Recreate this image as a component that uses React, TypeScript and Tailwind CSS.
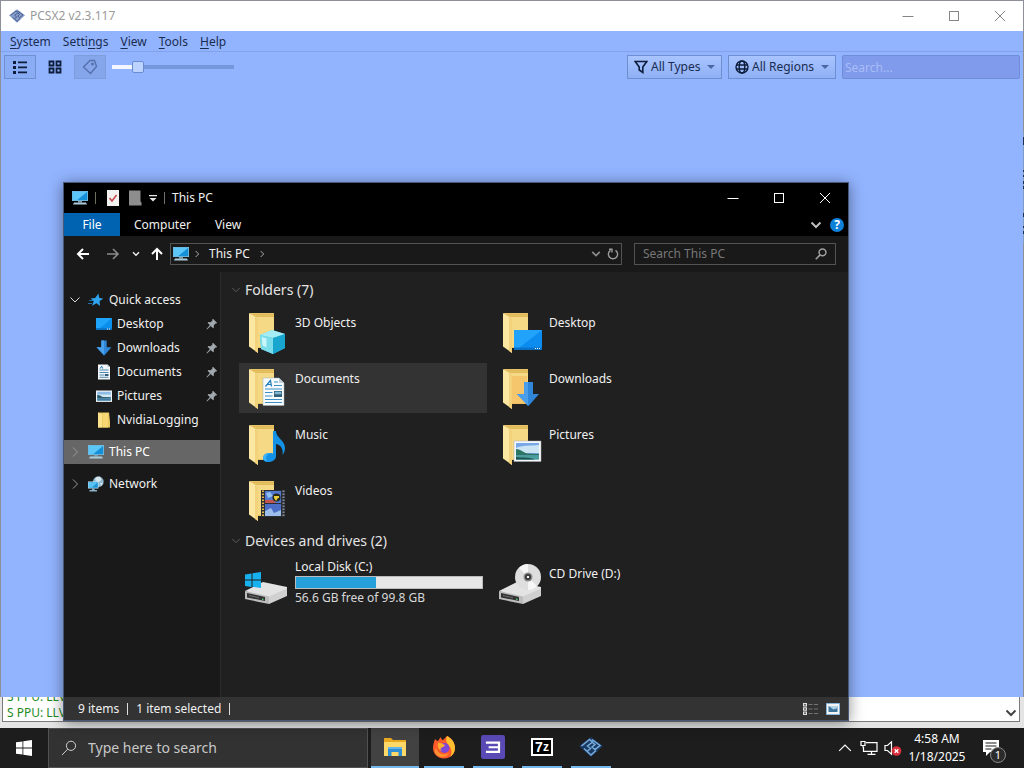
import type { ReactNode } from 'react';

type IconProps = { className?: string };

/* ---------- small glyphs ---------- */

function Chevron({ dir, className = '' }: { dir: 'down' | 'right' | 'up'; className?: string }) {
    const d = { down: 'M1.5 3.5 6 8l4.5-4.5', right: 'M4 1.5 8.5 6 4 10.5', up: 'M1 8.5 6 3.5l5 5' }[dir];
    return (
        <svg viewBox="0 0 12 12" fill="none" stroke="currentColor" className={className}>
            <path d={d} />
        </svg>
    );
}

function MinimizeIcon() {
    return (
        <svg viewBox="0 0 12 12" stroke="currentColor" className="w-3 h-3">
            <path d="M.5 6.5h11" />
        </svg>
    );
}

function MaximizeIcon() {
    return (
        <svg viewBox="0 0 12 12" fill="none" stroke="currentColor" className="w-3 h-3">
            <rect x="1.5" y="1.5" width="9" height="9" />
        </svg>
    );
}

function CloseIcon() {
    return (
        <svg viewBox="0 0 12 12" stroke="currentColor" className="w-3 h-3">
            <path d="m1 1 10 10M11 1 1 11" />
        </svg>
    );
}

function PinIcon() {
    return (
        <svg viewBox="0 0 12 12" fill="#a0a8ae" className="w-3 h-3 mr-0.5">
            <path d="M7 .8 11.2 5l-1 .6-.7-.1-1.7 1.8.1 2.1-.8.8-2.4-2.3L1 11.4l-.5-.5 3.4-3.8L1.6 4.9l.8-.8 2.2.1 1.8-1.7-.1-.9z" />
        </svg>
    );
}

function SearchIcon({ className }: IconProps) {
    return (
        <svg viewBox="0 0 16 16" fill="none" stroke="currentColor" className={className}>
            <circle cx="10" cy="5.8" r="4.6" />
            <path d="M6.7 9.2 1 15" />
        </svg>
    );
}

/* ---------- coloured icons ---------- */

function MonitorIcon({ className = 'w-4 h-4' }: IconProps) {
    return (
        <svg viewBox="0 0 16 16" className={className}>
            <path fill="#8fc4de" d="M0 1h16v10H0z" />
            <path fill="#1590d8" d="M.7 1.7h14.6v8.6H.7z" />
            <path fill="#5cc6f8" d="M.7 1.7h14.6L5 10.3H.7z" />
            <path fill="#7c98a6" d="M6 11h4v1.6H6z" />
            <path fill="#a9cbdc" d="M2 12.6h12l1 1.9H1z" />
        </svg>
    );
}

function StarIcon({ className = 'w-4 h-4' }: IconProps) {
    return (
        <svg viewBox="0 0 16 16" className={className}>
            <path fill="#2ea3ee" d="m10.5 1.600.6 4.200 4.200.9-3.700 2.400.4 4.900-3.500-2.700-4.500 2.500 1.700-4.600L2.600 6.400l4.600-.3z" />
            <path stroke="#1d6fa6" d="M1 8.5h4M0 11.500h4" />
        </svg>
    );
}

function DesktopIcon({ className = 'w-4 h-4' }: IconProps) {
    return (
        <svg viewBox="0 0 16 16" className={className}>
            <path fill="#0b8fec" d="M0 2h16v12H0z" />
            <path fill="#1fa4fb" d="M0 2h16L4 12H0z" />
            <path fill="#0a6fc0" d="M0 12.3h16V14H0z" />
            <path fill="#fff" d="M11 12.6h1v1h-1zm2 0h1v1h-1z" />
        </svg>
    );
}

function DownloadIcon({ className = 'w-4 h-4' }: IconProps) {
    return (
        <svg viewBox="0 0 16 16" className={className}>
            <path fill="#2f86d8" d="M5.3.5h5.4v6.7h4.8L8 15.7.5 7.2h4.8z" />
            <path fill="#4ba0e8" d="M5.3.5H8v14L.5 7.2h4.8z" />
        </svg>
    );
}

function DocumentIcon({ className = 'w-4 h-4' }: IconProps) {
    return (
        <svg viewBox="0 0 16 16" className={className}>
            <path fill="#f4f7f9" d="M2 .5h9.5L14 3v12.5H2z" />
            <path fill="#b8cad6" d="M11.5.5V3H14z" />
            <path stroke="#4a86ad" d="M3.5 6h9M3.5 8.5h9M3.5 11h5M3.5 13.3h9" />
            <path stroke="#1f78b4" d="m4 4.6 1.7-2.4 1 2.4" fill="none" />
            <path fill="#315c78" d="M9 10h3.5v2H9z" />
        </svg>
    );
}

function PictureIcon({ className = 'w-4 h-4' }: IconProps) {
    return (
        <svg viewBox="0 0 16 16" className={className}>
            <path fill="#f2f5f7" d="M0 2.5h16v11.4H0z" />
            <path fill="#8dbbe6" d="M1.2 3.7h13.6v9H1.2z" />
            <path fill="#d5e9f5" d="M1.2 6.5h13.6v2.7H1.2z" />
            <path fill="#2a5b6b" d="M1.2 7.2c2.2-.8 3.4 1 5.8 1.8l7.8.3v1H1.2z" />
            <path fill="#457c9d" d="M1.2 10.3h13.6v2.4H1.2z" />
        </svg>
    );
}

function SmallFolderIcon({ className = 'w-4 h-4' }: IconProps) {
    return (
        <svg viewBox="0 0 16 16" className={className}>
            <path fill="#e8c45c" d="M2 .5h11l1 9V15.5H2z" />
            <path fill="#fbe28a" d="M2 .5 6 2v13.5H2z" />
            <path fill="#f6d774" d="M6.6 1h5.6v14.5H6.6z" />
        </svg>
    );
}

function NetworkIcon({ className = 'w-4 h-4' }: IconProps) {
    return (
        <svg viewBox="0 0 16 16" className={className}>
            <circle cx="10.3" cy="5.7" r="5.4" fill="#8cb9cf" />
            <path fill="#d9e7ec" d="M8 1.2 12 .8l1.6 3-3 2.5L7 4zm4 6 3-.6-1.6 3.3z" />
            <path fill="#c5e6f6" d="M0 5.5h10.5v7H0z" />
            <path fill="#1c94d8" d="M.7 6.2h9.1v5.6H.7z" />
            <path fill="#5ac3f4" d="M.7 6.2h9.1l-6 5.6H.7z" />
            <path fill="#86b3c9" d="M4 12.5h2.6V14H9v1.5H1.5V14H4z" />
        </svg>
    );
}

/* Open folder with whatever lies in front of it */
function FolderIcon({ children }: { children: ReactNode }) {
    return (
        <svg viewBox="0 -1 48 48" className="w-12 h-12 shrink-0">
            <path fill="#e9c467" d="M7 5h24v35H14z" />
            <path fill="#f5d985" d="M12 9h19v30H12z" />
            <path stroke="#d7ae50" strokeWidth=".6" d="M8 6.5h23M10 8.4h21" />
            <path fill="#fbe6a2" d="M6 5 15 10.5V45L6 38.5z" />
            <path fill="#f2d37b" d="m12 8.5 3 2V45l-3-2z" />
            {children}
        </svg>
    );
}

const folderArt = {
    objects: (
        <>
            <path fill="#50cce4" d="m17 27 12-5 13 4v14l-12 6-12-5z" />
            <path fill="#a5ecf4" d="m17 27 12-5 13 4-12 4z" />
            <path fill="#7bdcea" d="m17 27 13 3v16l-12-5z" />
            <path fill="#18a5ce" d="m30 30 12-4v14l-12 6z" />
            <path fill="#c9f6fa" d="m18.5 29 5 1.2v9l-4-1.6z" />
        </>
    ),
    documents: (
        <>
            <path fill="#f8fbfc" stroke="#9eb0ba" strokeWidth=".5" d="M20 14h16l5 5v22.5H20z" />
            <path fill="#bdd0dc" d="M36 14v5h5z" />
            <path fill="none" stroke="#1c7bb8" strokeWidth="1.2" d="m22.5 22.500 5-6 1 6M24 20.500h4" />
            <path stroke="#3c8fc4" d="M31 18h4M31 21.500h8M22 25h17M22 28.500h7.500M22 32h7.500M22 35.500h17M22 38.500h17" />
            <path fill="#315f78" d="M31 27h8v6h-8z" />
            <path fill="#82b8d4" d="M31.700 27.700h6.600v2.500h-6.600z" />
        </>
    ),
    music: (
        <>
            <path fill="#1392e6" d="M30 11h3c0 7 9 9 9 17 0 3-1 5-2.500 7 1-6-1.500-10-6.500-11v12c0 4-4 6-8 6s-5-2-5-4c0-4 5-6 10-4.500z" />
            <path fill="#3db4fa" d="M20 38c0-4 5-5.500 8-4.500-3 0-5 2-5 4.500 0 1 .5 2 1.500 3-2.500 0-4.500-1-4.500-3z" />
        </>
    ),
    videos: (
        <>
            <path fill="#2b2e35" d="M18 14h24v27H18z" />
            <path fill="#5278cf" d="M22 15h16v12H22z" />
            <path fill="#4b6dc6" d="M22 28h16v12H22z" />
            <path fill="#c3544e" d="M22 24h8l3 3H22z" />
            <path fill="#9dbeea" d="m22 35 6-3 3 5 7-3v6H22z" />
            <path fill="#8fc0ef" d="m23 17 4-1 3 4-5 2z" />
            <circle cx="33.500" cy="21.500" r="4" fill="#292b1c" />
            <path fill="#e9cf3d" d="M31 20h5v2h-1l-2 3-2-3z" />
            <path stroke="#e4b849" strokeWidth="2" strokeDasharray="1.500 1.500" d="M20 14.500v26" />
            <path stroke="#86909a" strokeWidth="2" strokeDasharray="1.500 1.500" d="M40.500 14.500v26" />
        </>
    ),
    desktop: (
        <>
            <path fill="#0c8cee" d="M17 22h28v20H17z" />
            <path fill="#22a3fb" d="M17 22h28L22 40h-5z" />
            <path fill="#0872c9" d="M17 39.500h28V42H17z" />
            <path fill="#fff" d="M38 40h1v1h-1zm2 0h1v1h-1zm2 0h1v1h-1z" />
        </>
    ),
    downloads: (
        <>
            <path fill="#f5b95c" opacity=".6" d="M15 12h15v28H15z" />
            <path fill="#2f86d8" d="M27 18h9v12h6L31.500 42 20 30h7z" />
            <path fill="#4a9eea" d="M27 18h4v24L20 30h7z" />
        </>
    ),
    pictures: (
        <>
            <path fill="#f5f7f8" stroke="#a6afb5" strokeWidth=".5" d="M17 21h27v20.500H17z" />
            <path fill="#78a8e8" d="M19 23h23v16.500H19z" />
            <path fill="#cce5f5" d="M19 28c6-3 15-2 23-3v8H19z" />
            <path fill="#2d7563" d="M19 29c5 0 7 4 12 4.500l11 .5v1.500H19z" />
            <path fill="#4a9e9c" d="M19 35.500h23v4H19z" />
            <path fill="#1e544f" d="M19 37c7 1 11-.5 19 2.500H19z" />
        </>
    ),
};

function DriveBase() {
    return (
        <>
            <path fill="#e3e3e3" d="m2 33 18-9 24 5v3l-18 9z" />
            <path fill="#bcbcbc" d="m2 33 24 5.500V46L2 41z" />
            <path fill="#d0d0d0" d="m26 38.500 18-8V38l-18 8z" />
            <path fill="#333" d="m4 35 18 4v4L4 39.500z" />
            <path fill="#6b6b6b" d="m6 37 10 2.200v1L6 38z" />
            <path fill="#48c36c" d="M19 40.500h1.500V42H19z" />
        </>
    );
}

function LocalDiskIcon() {
    return (
        <svg viewBox="0 0 48 48" className="w-12 h-12 shrink-0">
            <DriveBase />
            <path fill="#17b1ef" d="m2 16.500 6.500-1v6H2zm7.500-1.200L18 14v7.500H9.500zM2 22.500h6.500v6.500L2 28zm7.500 0H18V30l-8.500-1.200z" />
        </svg>
    );
}

function CdDriveIcon() {
    return (
        <svg viewBox="0 0 48 48" className="w-12 h-12 shrink-0">
            <DriveBase />
            <circle cx="31" cy="19" r="13" fill="#dedede" />
            <path fill="#f6f6f6" d="M31 19 22 10a13 13 0 0 1 9-4zm0 0 9 9a13 13 0 0 1-9 4z" />
            <circle cx="31" cy="19" r="4.500" fill="#8b8b8b" />
            <circle cx="31" cy="19" r="3" fill="#333" />
            <circle cx="31" cy="19" r="1.300" fill="#eee" />
        </svg>
    );
}

function Pcsx2Logo({ className, light = false }: IconProps & { light?: boolean }) {
    return (
        <svg viewBox="0 0 24 20" className={className}>
            <path fill={light ? '#8ba0cb' : '#1b3a63'} d="M12 0 24 9 12 20 0 9z" />
            <path
                fill="none"
                stroke={light ? '#445c92' : '#78aedd'}
                strokeWidth="1.500"
                d="m2.500 9 8-6.500 3 2.500-5 4 3 2.500-3 2.500M13 2.500l8 6-5 4-3-2.500 3-2.500-2.500-2M5 11.500l7 6.500 5-4.500"
            />
        </svg>
    );
}

function FileExplorerIcon() {
    return (
        <svg viewBox="0 0 24 20" className="w-6 h-5">
            <path fill="#e8a920" d="M1 1h7l2 2h13v5H1z" />
            <path fill="#ffd968" d="M1 5h22v14H1z" />
            <path fill="#2f8fd4" d="M5 10h14v9h-3.500v-4h-7v4H5z" />
            <path fill="#64b5ea" d="M5 10h14v2H5z" />
        </svg>
    );
}

function FirefoxIcon() {
    return (
        <svg viewBox="0 0 24 24" className="w-6 h-6">
            <path fill="#ff5a2a" d="M3 4c1 1 2 2 3 2 1-2 2-3 3-4 0 2 1 3 2 3l4-4c4 2 8 6 8 12 0 6-5 10.500-11 10.500S1 19 1 13c0-3 1-6 2-9z" />
            <path fill="#ffbf2e" d="M15 1c4 2 8 6 8 12 0 4-2 7-5 9 3-5 1-9-1-11-2-3-4-5-2-10z" />
            <path fill="#ff9330" d="M4 13c2 6 8 8 13 5-2 4-7 5-11 3-3-2-4-5-2-8z" />
            <circle cx="12.500" cy="13" r="5" fill="#8147d8" />
            <path fill="#ffad30" d="M6 8c3-1 4 1 7 2-1 2-3 2-4 3s0 2 1 3c-3-1-5-4-4-8z" />
        </svg>
    );
}

function Rpcs3Icon() {
    return (
        <svg viewBox="0 0 22 22" className="w-6 h-6">
            <rect width="22" height="22" rx="2" fill="#5949b4" />
            <path fill="none" stroke="#fff" strokeWidth="2" d="M4.500 7h12v8.500h-12M7 11.200h9" />
        </svg>
    );
}

function SevenZipIcon() {
    return (
        <span className="flex h-[18px] w-[22px] items-center justify-center border-2 border-white bg-black font-['Liberation_Sans',sans-serif] text-sm leading-none font-bold text-white">
            7<span className="text-xs">z</span>
        </span>
    );
}

/* ---------- PCSX2 window ---------- */

function TitleButtons({ className }: IconProps) {
    return (
        <div className={`flex ${className}`}>
            <button aria-label="Minimize" className="flex w-[46px] items-center justify-center"><MinimizeIcon /></button>
            <button aria-label="Maximize" className="flex w-[46px] items-center justify-center"><MaximizeIcon /></button>
            <button aria-label="Close" className="flex w-[46px] items-center justify-center"><CloseIcon /></button>
        </div>
    );
}

function FilterSelect({ label, name, icon }: { label: string; name: string; icon: ReactNode }) {
    return (
        <label className="relative flex h-6 items-center gap-[3px] border border-[#6d8fcf] bg-linear-to-b from-[#a9c4ff] to-[#8fb0f5] pl-1.5">
            {icon}
            <select aria-label={name} className="appearance-none bg-transparent pr-5 outline-none">
                <option>{label}</option>
            </select>
            <span className="absolute right-1.5 border-x-4 border-t-4 border-x-transparent border-t-[#4a67a0]" />
        </label>
    );
}

const menus = ['System', 'Settings', 'View', 'Tools', 'Help'];

function MenuLabel({ text }: { text: string }) {
    // the mnemonic is the first letter, except in "Settings"
    const i = text === 'Settings' ? 5 : 0;
    return (
        <>
            {text.slice(0, i)}
            <span className="underline underline-offset-2">{text[i]}</span>
            {text.slice(i + 1)}
        </>
    );
}

function Pcsx2Window() {
    return (
        <section className="absolute inset-x-0 top-0 bottom-[31px] flex flex-col border border-[#8d8f99] border-b-0 bg-[#92b4ff] text-[#1a2c50]">
            <header className="flex h-[30px] items-stretch bg-white text-[#9a9a9a]">
                <div className="flex flex-1 items-center gap-[5px] pl-2">
                    <Pcsx2Logo light className="w-4 h-3.5" />
                    <span>PCSX2 v2.3.117</span>
                </div>
                <TitleButtons className="text-[#858585]" />
            </header>
            <nav className="flex h-[21px] items-center gap-3 border-b border-[#82a3ea] pt-0.5 pl-[9px]">
                {menus.map((menu) => (
                    <button key={menu}><MenuLabel text={menu} /></button>
                ))}
            </nav>
            <div className="flex items-center gap-[6px] py-[3px] pr-[3px] pl-[3px]">
                <button aria-label="Game list" className="flex h-6 w-8 items-center justify-center border border-[#6f90cf] bg-[#8aacf4]">
                    <svg viewBox="0 0 14 14" className="w-3.5 h-3.5" fill="#0d1d3b">
                        <path d="M0 1h3v3H0zm0 5h3v3H0zm0 5h3v3H0zM5 1.500h9v1.800H5zm0 5h9v1.800H5zm0 5h9v1.800H5z" />
                    </svg>
                </button>
                <button aria-label="Game grid" className="flex h-6 w-[26px] items-center justify-center">
                    <svg viewBox="0 0 14 14" className="w-3.5 h-3.5" fill="none" stroke="#0d1d3b" strokeWidth="1.800">
                        <path d="M1.500 1.500h4v4h-4zM8.500 1.500h4v4h-4zM1.500 8.500h4v4h-4zM8.500 8.500h4v4h-4z" />
                    </svg>
                </button>
                <button aria-label="Show titles" className="flex h-6 w-8 items-center justify-center border border-[#7d9ddd] bg-[#86a6ec]">
                    <svg viewBox="0 0 16 16" className="w-4 h-4" fill="none" stroke="#5572ad" strokeWidth="1.400">
                        <path d="M8 1.500h4.500l2 6L8.500 14.500l-7-6.500z" />
                        <circle cx="10.500" cy="5" r=".8" />
                    </svg>
                </button>
                <input
                    type="range"
                    aria-label="Cover size"
                    defaultValue={18}
                    className="h-4 w-[122px] appearance-none bg-[linear-gradient(to_right,#f2f7ff_20%,#7598dd_20%)] bg-[length:100%_4px] bg-center bg-no-repeat [&::-webkit-slider-thumb]:h-3 [&::-webkit-slider-thumb]:w-3 [&::-webkit-slider-thumb]:appearance-none [&::-webkit-slider-thumb]:rounded-xs [&::-webkit-slider-thumb]:border [&::-webkit-slider-thumb]:border-[#6a8cce] [&::-webkit-slider-thumb]:bg-[#bcd3ff]"
                />
                <div className="ml-auto flex gap-[6px]">
                    <FilterSelect
                        label="All Types"
                        name="Game type"
                        icon={
                            <svg viewBox="0 0 14 14" className="w-3.5 h-3.5" fill="none" stroke="#0d1d3b" strokeWidth="1.600">
                                <path d="M1.200 1.500h11.600L8.800 7v5.500L5.200 10V7z" />
                            </svg>
                        }
                    />
                    <FilterSelect
                        label="All Regions"
                        name="Region"
                        icon={
                            <svg viewBox="0 0 14 14" className="w-3.5 h-3.5" fill="none" stroke="#0d1d3b" strokeWidth="1.400">
                                <circle cx="7" cy="7" r="6" />
                                <ellipse cx="7" cy="7" rx="2.800" ry="6" />
                                <path d="M1 5h12M1 9h12" />
                            </svg>
                        }
                    />
                    <input
                        aria-label="Search games"
                        placeholder="Search..."
                        className="h-6 w-[178px] rounded-xs border border-[#6f8cd6] bg-[#809aec] px-0.5 outline-none placeholder:text-[#aabdf6]"
                    />
                </div>
            </div>
            {/* sliver of the window behind, along the right edge */}
            <svg viewBox="0 0 3 110" className="absolute -right-px top-[132px] h-[110px] w-[3px]">
                <path fill="#7f9cc6" d="M2 0h1v110H2z" />
                <path fill="#1f2f50" d="M2 4h1v8H2zm0 33h1v2H2zm0 5h1v2H2zm0 6h1v3H2zm0 5h1v3H2zm0 27h1v4H2zm0 13h1v2H2zm0 5h1v3H2z" />
            </svg>
        </section>
    );
}

/* Log window that shows under the game list */
function LogWindow() {
    return (
        <section className="absolute inset-0 flex flex-col justify-end bg-[#e4e4e4] pr-1 pb-1.5 pl-0.5">
            <div className="flex h-7 items-end overflow-hidden border border-[#7b7b7b] bg-white">
                <p className="flex-1 overflow-hidden pl-1 leading-4 whitespace-nowrap text-[#1f8a1f]">
                    S PPU: LLVM<br />S PPU: LLVM
                </p>
                <button aria-label="Scroll down" className="flex h-4 w-4 items-center justify-center text-[#444]">
                    <Chevron dir="down" className="w-3 h-3 stroke-2" />
                </button>
            </div>
        </section>
    );
}

/* ---------- File Explorer ---------- */

function TreeItem({ icon, label, pinned, open, level = 0, active }: {
    icon: ReactNode;
    label: string;
    pinned?: boolean;
    open?: boolean;
    level?: number;
    active?: boolean;
}) {
    return (
        <button className={`flex h-6 w-full items-center pl-[5px] text-left ${active ? 'bg-[#666] text-white' : ''}`}>
            <span className={`flex items-center ${level ? 'w-[27px]' : 'w-[19px]'}`}>
                {!level && <Chevron dir={open ? 'down' : 'right'} className={`w-3 h-3 ${open ? 'text-[#ddd]' : 'text-[#999]'}`} />}
            </span>
            {icon}
            <span className="flex-1 pl-[5px] whitespace-nowrap">{label}</span>
            {pinned && <PinIcon />}
        </button>
    );
}

function Sidebar() {
    return (
        <aside className="flex w-[157px] shrink-0 flex-col gap-2 border-r border-[#2c2c2c] bg-[#191919] pt-4">
            <div>
                <TreeItem icon={<StarIcon />} label="Quick access" open />
                <TreeItem icon={<DesktopIcon />} label="Desktop" level={1} pinned />
                <TreeItem icon={<DownloadIcon />} label="Downloads" level={1} pinned />
                <TreeItem icon={<DocumentIcon />} label="Documents" level={1} pinned />
                <TreeItem icon={<PictureIcon />} label="Pictures" level={1} pinned />
                <TreeItem icon={<SmallFolderIcon />} label="NvidiaLogging" level={1} />
            </div>
            <TreeItem icon={<MonitorIcon />} label="This PC" active />
            <TreeItem icon={<NetworkIcon />} label="Network" />
        </aside>
    );
}

const folders = [
    { name: '3D Objects', art: folderArt.objects },
    { name: 'Desktop', art: folderArt.desktop },
    { name: 'Documents', art: folderArt.documents, selected: true },
    { name: 'Downloads', art: folderArt.downloads },
    { name: 'Music', art: folderArt.music },
    { name: 'Pictures', art: folderArt.pictures },
    { name: 'Videos', art: folderArt.videos },
];

function GroupHeading({ children }: { children: ReactNode }) {
    return (
        <h2 className="mb-[5px] flex h-6 items-center gap-1 pl-2.5 text-sm text-[#e4e4e4]">
            <Chevron dir="down" className="w-2.5 h-2.5 text-[#6a6a6a]" />
            {children}
        </h2>
    );
}

function Content() {
    return (
        <main className="min-w-0 flex-1 bg-[#202020] pt-1.5">
            <GroupHeading>Folders (7)</GroupHeading>
            <div className="mb-1 grid grid-cols-[repeat(auto-fill,248px)] gap-1.5 pl-[18px] pr-24">
                {folders.map((folder) => (
                    <button
                        key={folder.name}
                        className={`flex h-[50px] items-start gap-1 pl-1 text-left ${folder.selected ? 'bg-[#333]' : ''}`}
                    >
                        <FolderIcon>{folder.art}</FolderIcon>
                        <span className="pt-2 leading-4">{folder.name}</span>
                    </button>
                ))}
            </div>
            <GroupHeading>Devices and drives (2)</GroupHeading>
            <div className="grid grid-cols-[repeat(auto-fill,248px)] gap-1.5 pl-[18px] pr-24">
                <button className="flex h-[50px] items-start gap-1 pl-1 text-left">
                    <LocalDiskIcon />
                    <span className="flex flex-1 flex-col pr-1">
                        <span className="leading-[18px]">Local Disk (C:)</span>
                        <span className="flex h-[13px] border border-[#bcbcbc] bg-[#e6e6e6]">
                            <span className="w-[43%] bg-[#26a0da]" />
                        </span>
                        <span className="leading-[18px] text-[#d8d8d8]">56.6 GB free of 99.8 GB</span>
                    </span>
                </button>
                <button className="flex h-[50px] items-start gap-1 pl-1 text-left">
                    <CdDriveIcon />
                    <span className="pt-2 leading-4">CD Drive (D:)</span>
                </button>
            </div>
        </main>
    );
}

function Explorer() {
    return (
        <section className="absolute top-[182px] right-[175px] bottom-[7px] left-[63px] flex flex-col border border-[#4a5878] bg-[#191919] text-[#f0f0f0] shadow-[0_2px_14px_rgba(0,0,0,0.45)]">
            <header className="flex h-[30px] bg-black">
                <div className="flex flex-1 items-center pl-2">
                    <MonitorIcon />
                    <span className="mx-[7px] h-3 w-px bg-[#6f6f5f]" />
                    <button aria-label="Properties" className="ml-0.5">
                        <svg viewBox="0 0 16 16" className="w-4 h-4">
                            <path fill="#f3f0f0" d="M2 0h12v16H2z" />
                            <path fill="none" stroke="#c4474b" strokeWidth="1.500" d="m4.500 8 2.500 3L11.500 5" />
                        </svg>
                    </button>
                    <button aria-label="New folder" className="ml-1.5">
                        <svg viewBox="0 0 16 16" className="w-4 h-4">
                            <path fill="#8d8d8d" d="M2 .5h11.500v11l1 1V15.500H2z" />
                        </svg>
                    </button>
                    <button aria-label="Customize toolbar" className="ml-1.5">
                        <svg viewBox="0 0 8 8" className="w-2 h-2" fill="#e6e6e6">
                            <path d="M0 1h8v1.200H0zM.5 4h7L4 7.500z" />
                        </svg>
                    </button>
                    <span className="mx-[7px] h-3 w-px bg-[#6f6f6f]" />
                    <h1>This PC</h1>
                </div>
                <TitleButtons className="text-white" />
            </header>

            <div className="flex h-[23px] items-stretch bg-black">
                <button className="w-14 bg-[#0063b1] text-white">File</button>
                <button className="pl-[14px]">Computer</button>
                <button className="pl-6">View</button>
                <div className="ml-auto flex items-center gap-2 pr-1">
                    <button aria-label="Expand ribbon"><Chevron dir="down" className="w-3 h-3 stroke-2 text-[#bdbdbd]" /></button>
                    <button aria-label="Help" className="h-3.5 w-3.5 rounded-full bg-[#0f80d8] text-center text-xs leading-[14px] font-bold text-white">?</button>
                </div>
            </div>

            <div className="flex h-9 items-center pr-3 pl-3">
                <button aria-label="Back" className="text-white">
                    <svg viewBox="0 0 14 14" className="w-3.5 h-3.5" fill="none" stroke="currentColor" strokeWidth="2">
                        <path d="M13 7H2M7 2 2 7l5 5" />
                    </svg>
                </button>
                <button aria-label="Forward" className="ml-4 text-[#8a8a8a]">
                    <svg viewBox="0 0 14 14" className="w-3.5 h-3.5" fill="none" stroke="currentColor" strokeWidth="1.600">
                        <path d="M1 7h11M7 2l5 5-5 5" />
                    </svg>
                </button>
                <button aria-label="Recent locations" className="ml-3"><Chevron dir="down" className="w-2 h-2 stroke-2" /></button>
                <button aria-label="Up" className="ml-2.5 text-white">
                    <svg viewBox="0 0 14 14" className="w-3.5 h-3.5" fill="none" stroke="currentColor" strokeWidth="2">
                        <path d="M7 13V2M2 7l5-5 5 5" />
                    </svg>
                </button>
                <div className="ml-1.5 flex h-[22px] flex-1 items-center border border-[#535353] pr-0.5 pl-0.5">
                    <MonitorIcon />
                    <Chevron dir="right" className="ml-1 w-2 h-2 stroke-[1.5] text-[#aaa]" />
                    <button className="mx-2">This PC</button>
                    <Chevron dir="right" className="w-2 h-2 stroke-[1.5] text-[#aaa]" />
                    <button aria-label="Previous locations" className="ml-auto"><Chevron dir="down" className="w-2.5 h-2.5 stroke-2 text-[#8d8d8d]" /></button>
                    <button aria-label="Refresh" className="ml-1.5 text-[#9b9b9b]">
                        <svg viewBox="0 0 12 12" className="w-3 h-3" fill="none" stroke="currentColor" strokeWidth="1.400">
                            <path d="M8.500 2.300a4.600 4.600 0 1 1-5 0M2 1.200h3v3.300" />
                        </svg>
                    </button>
                </div>
                <div className="ml-3 flex h-[22px] w-[202px] items-center border border-[#535353] pr-2 pl-2">
                    <input
                        aria-label="Search This PC"
                        placeholder="Search This PC"
                        className="min-w-0 flex-1 bg-transparent outline-none placeholder:text-[#777]"
                    />
                    <SearchIcon className="w-3 h-3 stroke-2 text-[#a0a0a0]" />
                </div>
            </div>

            <div className="flex min-h-0 flex-1">
                <Sidebar />
                <Content />
            </div>

            <footer className="flex h-[23px] items-center bg-[#333] pr-2 pl-[14px]">
                <span>9 items</span>
                <span className="mx-2 h-3 w-px bg-[#ddd]" />
                <span>1 item selected</span>
                <span className="mx-2 h-3 w-px bg-[#ddd]" />
                <div className="ml-auto flex items-center gap-2">
                    <button aria-label="Details view">
                        <svg viewBox="0 0 16 12" className="w-4 h-3">
                            <path fill="#e0e0e0" d="M1 0h4v3.400H1zm0 4.300h4v3.400H1zm0 4.300h4V12H1z" />
                            <path fill="#333" d="M2.300 1h1.400v1.400H2.300zm0 4.300h1.400v1.400H2.300zm0 4.300h1.400V11H2.300z" />
                            <path stroke="#757575" strokeDasharray="4 1.500" d="M6.500 1.500H16M6.500 6H16M6.500 10.500H16" />
                        </svg>
                    </button>
                    <button aria-label="Large icons view">
                        <svg viewBox="0 0 14 12" className="w-3.5 h-3">
                            <path fill="#f4f4f4" stroke="#88b6d8" d="M.5.500h13v11H.5z" />
                            <path fill="#3c759b" d="M2.500 3h9v6h-9z" />
                            <path fill="#b2d4ea" d="M2.500 3h9v2l-4 1.500z" />
                        </svg>
                    </button>
                </div>
            </footer>
        </section>
    );
}

/* ---------- taskbar ---------- */

const apps = [
    { name: 'File Explorer', icon: <FileExplorerIcon />, active: true },
    { name: 'Firefox', icon: <FirefoxIcon /> },
    { name: 'RPCS3', icon: <Rpcs3Icon /> },
    { name: '7-Zip', icon: <SevenZipIcon /> },
    { name: 'PCSX2', icon: <Pcsx2Logo className="w-6 h-5" /> },
];

function Taskbar() {
    return (
        <footer className="flex h-10 shrink-0 items-stretch bg-[#1d1d1d] text-white">
            <button aria-label="Start" className="flex w-12 items-center justify-center">
                <svg viewBox="0 0 16 16" className="w-4 h-4" fill="#fff">
                    <path d="m0 2.300 6.500-.9v6.200H0zm7.300-1L16 0v7.600H7.300zM0 8.400h6.500v6.200L0 13.700zm7.300 0H16V16l-8.700-1.300z" />
                </svg>
            </button>
            <label className="flex w-80 items-center gap-[11px] border border-[#525252] bg-[#323232] pl-3 text-[#d0d0d0]">
                <SearchIcon className="w-4 h-4" />
                <input
                    aria-label="Type here to search"
                    placeholder="Type here to search"
                    className="min-w-0 flex-1 bg-transparent text-sm outline-none placeholder:text-[#c8c8c8]"
                />
            </label>
            <div className="ml-[3px] flex gap-px">
                {apps.map((app) => (
                    <button
                        key={app.name}
                        aria-label={app.name}
                        className={`flex w-12 flex-col items-center ${app.active ? 'bg-[#424242]' : ''}`}
                    >
                        <span className="flex flex-1 items-center">{app.icon}</span>
                        <span className={`h-0.5 bg-[#76b9ed] ${app.active ? 'w-full' : 'w-10'}`} />
                    </button>
                ))}
            </div>
            <div className="ml-auto flex items-center pr-6">
                <button aria-label="Show hidden icons"><Chevron dir="up" className="w-3.5 h-3.5" /></button>
                <button aria-label="Network status" className="ml-2">
                    <svg viewBox="0 0 18 16" className="w-[18px] h-4" fill="none" stroke="#fff" strokeWidth="1.200">
                        <path d="M6 2.600h11v8.800H3.500V7M11.500 11.400v3M7.500 14.400h8" />
                        <path d="M1 1.500h4v4H1zM3 5.500v2" />
                    </svg>
                </button>
                <button aria-label="Volume" className="ml-1.5">
                    <svg viewBox="0 0 18 16" className="w-[18px] h-4">
                        <path fill="none" stroke="#fff" strokeWidth="1.200" d="M1 5.500h2.500L7.500 1.800v12.400l-4-3.700H1z" />
                        <circle cx="12.500" cy="11" r="4.800" fill="#d92f3b" />
                        <path stroke="#fff" strokeWidth="1.400" d="m10.700 9.200 3.600 3.600m0-3.600-3.600 3.600" />
                    </svg>
                </button>
                <button className="ml-1 w-[62px] text-center leading-[18px] whitespace-nowrap">
                    4:58 AM<br />1/18/2025
                </button>
                <button aria-label="Notifications" className="relative ml-3.5">
                    <svg viewBox="0 0 18 18" className="w-[18px] h-[18px]">
                        <path fill="#fff" d="M1 1h16v12H8l-4 4v-4H1z" />
                        <path stroke="#1d1d1d" strokeWidth="1.200" d="M3.500 4h11M3.500 7h11M3.500 10h6" />
                    </svg>
                    <span className="absolute top-2 left-2 h-4 w-4 rounded-full border border-[#8a8a8a] bg-[#2b2b2b] text-center text-[11px] leading-[14px]">1</span>
                </button>
            </div>
        </footer>
    );
}

function App() {
    return (
        <div className="flex h-screen flex-col overflow-hidden font-['Noto_Sans',sans-serif] text-xs">
            <div className="relative min-h-0 flex-1">
                <LogWindow />
                <Pcsx2Window />
                <Explorer />
            </div>
            <Taskbar />
        </div>
    );
}

export default App;
